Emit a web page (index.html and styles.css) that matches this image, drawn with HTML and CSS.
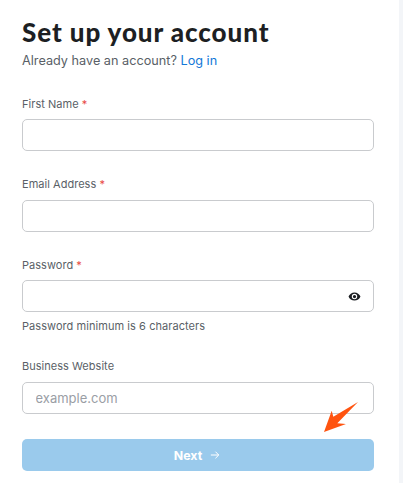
FILE: index.html
```html
<!DOCTYPE html>
<html lang="en">
<head>
  <meta charset="UTF-8">
  <meta name="viewport" content="width=device-width, initial-scale=1.0">
  <title>Set up your account</title>
  <link rel="stylesheet" href="styles.css">
</head>
<body>
  <main class="panel">
    <h1>Set up your account</h1>
    <p class="login-line">Already have an account? <a href="#">Log in</a></p>

    <form class="signup-form">
      <div class="field">
        <label for="firstName">First Name <span class="req">*</span></label>
        <div class="input-box"><input id="firstName" type="text"></div>
      </div>
      <div class="field">
        <label for="email">Email Address <span class="req">*</span></label>
        <div class="input-box"><input id="email" type="text"></div>
      </div>
      <div class="field field-hint">
        <label for="password">Password <span class="req">*</span></label>
        <div class="input-box">
          <input id="password" type="password">
          <svg class="eye" viewBox="0 0 24 24" width="13" height="13" aria-hidden="true">
            <path fill="#1a1d21" fill-rule="evenodd" d="M12 4.500C7 4.500 2.700 7.600 1 12c1.700 4.400 6 7.500 11 7.500s9.300-3.100 11-7.500c-1.700-4.400-6-7.500-11-7.500zM12 17a5 5 0 1 1 0-10 5 5 0 0 1 0 10zm0-8a3 3 0 1 0 0 6 3 3 0 0 0 0-6z"/>
          </svg>
        </div>
        <p class="hint">Password minimum is 6 characters</p>
      </div>
      <div class="field">
        <label for="website">Business Website</label>
        <div class="input-box"><input id="website" type="text" placeholder="example.com"></div>
      </div>
      <button class="next-btn" type="button">Next
        <svg viewBox="0 0 12 12" width="10" height="10" aria-hidden="true">
          <path fill="none" stroke="#fff" stroke-width="1.200" d="M1 6h9.500M6.500 2l4 4-4 4"/>
        </svg>
      </button>
    </form>
  </main>

  <!-- annotation arrow drawn over the form -->
  <svg class="arrow" viewBox="0 0 36 34" width="36" height="34" aria-hidden="true">
    <path fill="#ff5410" d="M35 1 L10.300 15.700 L8.700 9.700 L1 31 L23 23 L14.300 22.300 Z"/>
  </svg>
</body>
</html>
```

FILE: styles.css
```css
* {
  box-sizing: border-box;
}

body {
  margin: 0;
  background: #f3f5f8;
  font-family: Inter, "Liberation Sans", sans-serif;
  color: #5a5f67;
  overflow: hidden;
}

.panel {
  width: 399px;
  height: 483px;
  background: #fff;
  padding: 16px 25px 0 22px;
}

h1 {
  margin: 0;
  font-family: Lato, "Liberation Sans", sans-serif;
  font-size: 26px;
  line-height: 32px;
  font-weight: 900;
  letter-spacing: 0.92px;
  color: #1d1f23;
}

.login-line {
  margin: 4px 0 0;
  font-size: 12.7px;
  line-height: 18px;
}

.login-line a {
  color: #1478d8;
  text-decoration: none;
}

.signup-form {
  margin-top: 25.5px;
}

.field {
  margin-bottom: 25px;
}

.field-hint {
  margin-bottom: 24px;
}

label {
  display: block;
  font-size: 11px;
  letter-spacing: 0.03px;
  line-height: 16px;
  margin-bottom: 7.5px;
}

.req {
  color: #e8483f;
}

.input-box {
  display: flex;
  align-items: center;
  height: 32px;
  background: #fff;
  border: 1px solid #c9cbce;
  border-radius: 5px;
  padding: 0 13px 0 12.5px;
}

.input-box input {
  flex: 1;
  min-width: 0;
  border: none;
  outline: none;
  padding: 0;
  background: transparent;
  font-family: inherit;
  font-size: 13px;
  color: #1d1f23;
}

.input-box input::placeholder {
  color: #9a9ea5;
}

.eye {
  margin-right: -0.5px;
}

.hint {
  margin: 6px 0 0;
  font-size: 11px;
  letter-spacing: 0.06px;
  line-height: 16px;
}

.next-btn {
  display: flex;
  align-items: center;
  justify-content: center;
  gap: 8px;
  width: 100%;
  height: 32px;
  margin-top: 25px;
  padding: 1px 2px 0 0;
  border: none;
  border-radius: 5px;
  background: #9acaec;
  color: #fff;
  font-family: inherit;
  font-size: 12.4px;
  font-weight: 700;
}

.arrow {
  position: absolute;
  left: 323px;
  top: 401px;
}
```
